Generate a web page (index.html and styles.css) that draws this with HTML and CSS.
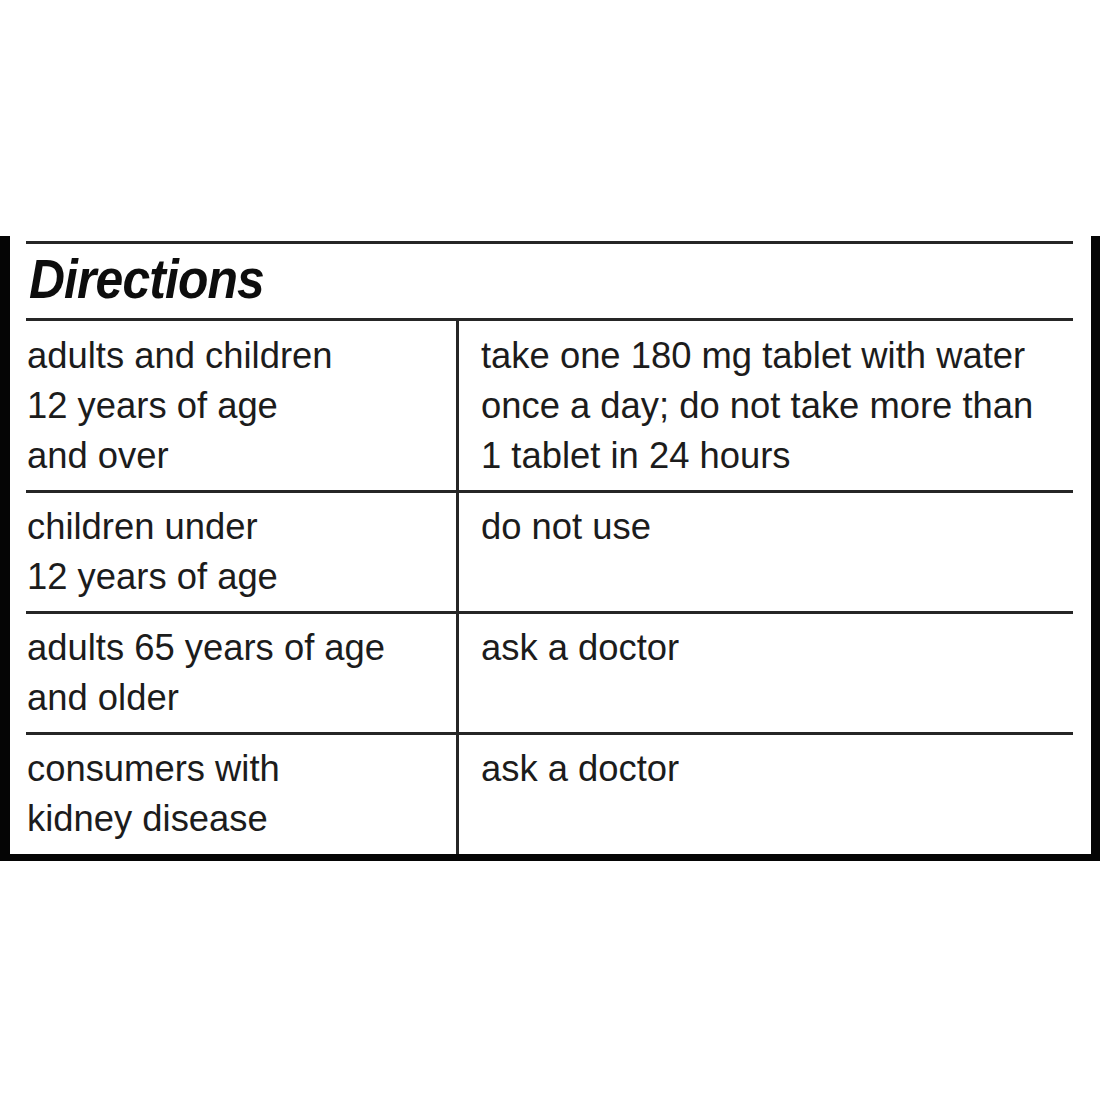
FILE: index.html
```html
<!DOCTYPE html>
<html>
<head>
<meta charset="utf-8">
<link rel="stylesheet" href="styles.css">
</head>
<body>
<div class="panel">
  <div class="title"><span class="title-text">Directions</span></div>
  <div class="row row-first">
    <div class="cell left">adults and children<br>12 years of age<br>and over</div>
    <div class="cell right">take one 180 mg tablet with water<br>once a day; do not take more than<br>1 tablet in 24 hours</div>
  </div>
  <div class="row">
    <div class="cell left">children under<br>12 years of age</div>
    <div class="cell right">do not use</div>
  </div>
  <div class="row">
    <div class="cell left">adults 65 years of age<br>and older</div>
    <div class="cell right">ask a doctor</div>
  </div>
  <div class="row row-last">
    <div class="cell left">consumers with<br>kidney disease</div>
    <div class="cell right">ask a doctor</div>
  </div>
</div>
</body>
</html>
```

FILE: styles.css
```css
html, body {
  margin: 0;
  padding: 0;
  background: #ffffff;
}

body {
  width: 1100px;
  height: 1100px;
  font-family: "Liberation Sans", Arial, sans-serif;
  color: #1c1c1c;
}

.panel {
  box-sizing: border-box;
  width: 1100px;
  margin-top: 236px;
  padding: 5px 18px 0 16px;
  border-left: 10px solid #050505;
  border-right: 9px solid #050505;
  border-bottom: 7px solid #050505;
}

.title {
  box-sizing: border-box;
  height: 77px;
  border-top: 3px solid #262626;
  padding-top: 7px;
}

.title-text {
  display: inline-block;
  font-size: 56px;
  line-height: 56px;
  font-weight: bold;
  font-style: italic;
  color: #0d0d0d;
  letter-spacing: -1px;
  transform: scaleX(0.89);
  transform-origin: left center;
  margin-left: 3px;
}

.row {
  display: grid;
  grid-template-columns: 433px 1fr;
  border-top: 3px solid #262626;
}

.cell {
  font-size: 36.4px;
  line-height: 50px;
  padding-top: 9px;
  padding-bottom: 9px;
}

.row-first .cell {
  padding-top: 10px;
  padding-bottom: 9px;
}

.row-last .cell {
  padding-bottom: 10px;
}

.left {
  padding-left: 1px;
  border-right: 3px solid #262626;
}

.right {
  padding-left: 22px;
}
```
